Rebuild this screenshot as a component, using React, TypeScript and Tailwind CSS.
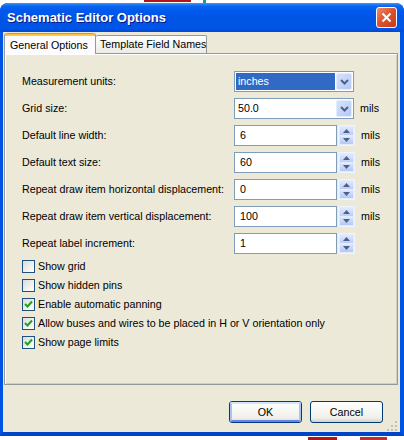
import React from 'react';

const ui = "font-['Liberation_Sans',Arial,sans-serif] text-[10.7px] text-black whitespace-nowrap";

function Chevron() {
  return (
    <svg width="9" height="6" viewBox="0 0 9 6">
      <path d="M1 1 L4.5 4.5 L8 1" stroke="#4D6185" strokeWidth="2" fill="none" />
    </svg>
  );
}

function Combo({ value, selected }: { value: string; selected?: boolean }) {
  return (
    <div className="flex h-[21px] w-[120px] shrink-0 items-stretch border border-[#7F9DB9] bg-white p-[1px]">
      <div className="flex flex-1 items-center pr-[1px]">
        <div
          className={
            selected
              ? 'flex h-full w-full items-center bg-[#316AC5] pl-[2px] text-white'
              : 'flex h-full w-full items-center pl-[2px]'
          }
        >
          {value}
        </div>
      </div>
      <div className="flex w-[16px] items-center justify-center rounded-[2px] border border-[#E3EBFD] bg-[linear-gradient(135deg,#D6E2FE,#B4C8F6)]">
        <Chevron />
      </div>
    </div>
  );
}

function SpinArrow({ up }: { up?: boolean }) {
  return (
    <svg width="7" height="4" viewBox="0 0 7 4">
      <path d={up ? 'M0 4 L3.5 0 L7 4 Z' : 'M0 0 L3.5 4 L7 0 Z'} fill="#4D6185" />
    </svg>
  );
}

function Spin({ value }: { value: string }) {
  return (
    <div className="flex h-[21px] shrink-0 items-stretch">
      <div className="flex w-[103px] items-center border border-[#7F9DB9] bg-white pl-[5px]">{value}</div>
      <div className="ml-[1px] flex w-[17px] flex-col border border-[#F0F4FE]">
        <div className="flex flex-1 items-center justify-center rounded-[1px] border border-[#E3EBFD] bg-[linear-gradient(180deg,#E0E9FE,#BCCDF8)]">
          <SpinArrow up />
        </div>
        <div className="flex flex-1 items-center justify-center rounded-[1px] border border-[#E3EBFD] bg-[linear-gradient(180deg,#D6E2FE,#B4C8F6)]">
          <SpinArrow />
        </div>
      </div>
    </div>
  );
}

function Row({ label, unit, children }: { label: string; unit?: boolean; children: React.ReactNode }) {
  return (
    <div className="flex h-[21px] items-center">
      <div className="w-[212px] shrink-0">{label}</div>
      {children}
      {unit && <span className="ml-[6px]">mils</span>}
    </div>
  );
}

function Check({ label, checked }: { label: string; checked?: boolean }) {
  return (
    <div className="flex h-[19px] items-center">
      <div className="flex h-[13px] w-[13px] items-center justify-center border border-[#1C5180] bg-[linear-gradient(135deg,#DCDCD7,#FFFFFF)]">
        {checked && (
          <svg width="9" height="9" viewBox="0 0 9 9">
            <path d="M1 4 L3.5 6.5 L8 1.5" stroke="#21A121" strokeWidth="2" fill="none" />
          </svg>
        )}
      </div>
      <span className="ml-[3px]">{label}</span>
    </div>
  );
}

function Btn({ label, isDefault }: { label: string; isDefault?: boolean }) {
  return (
    <div className="h-[22px] w-[73px] rounded-[3px] border border-[#003C74] bg-[linear-gradient(180deg,#FFFFFF,#F0F0EA_80%,#D6D0C5)]">
      <div
        className={
          isDefault
            ? 'flex h-full w-full items-center justify-center rounded-[2px] border-2 border-[#A8C4F0] border-t-[#CEE7FF] border-b-[#6982EE]'
            : 'flex h-full w-full items-center justify-center'
        }
      >
        {label}
      </div>
    </div>
  );
}

export default function App() {
  return (
    <div className={`relative h-[440px] w-[404px] overflow-hidden bg-white ${ui}`}>
      <div className="absolute left-[144px] top-0 h-[2px] w-[47px] bg-[#B01818]" />
      <div className="absolute left-[203px] top-0 h-[3px] w-[3px] bg-[#13A090]" />
      <div className="absolute left-[308px] top-[437px] h-[3px] w-[29px] bg-[#B01818]" />
      <div className="absolute left-[360px] top-[437px] h-[3px] w-[27px] bg-[#C03030]" />

      <div className="mt-[3px] flex h-[433px] w-[404px] flex-col overflow-hidden rounded-t-[8px] bg-[#0054E3]">
        {/* title bar */}
        <div className="flex h-[29px] shrink-0 items-center bg-[linear-gradient(180deg,#3D95FF_0px,#0A66F0_3px,#0058EE_8px,#0054E3_18px,#0056EB_25px,#0049D0_29px)] pl-[7px] pr-[7px]">
          <div className="flex-1 pt-[1px] font-['Liberation_Sans',Arial,sans-serif] text-[13px] font-bold text-white [text-shadow:1px_1px_0_#0A1883]">
            Schematic Editor Options
          </div>
          <div className="flex h-[21px] w-[21px] items-center justify-center rounded-[3px] border border-white bg-[linear-gradient(135deg,#F08C6C,#E1532F_45%,#C43A18)]">
            <svg width="11" height="11" viewBox="0 0 11 11">
              <path d="M1.5 1.5 L9.5 9.5 M9.5 1.5 L1.5 9.5" stroke="white" strokeWidth="2" />
            </svg>
          </div>
        </div>

        {/* client */}
        <div className="flex flex-1 flex-col border-b-4 border-l-[3px] border-r-4 border-[#0054E3] border-b-[#0044C8] bg-[#ECE9D8]">
          {/* tabs */}
          <div className="ml-[1px] mt-[1px] flex h-[20px] items-end">
            <div className="relative z-10 -mb-[1px] flex h-[21px] w-[92px] flex-col rounded-t-[3px] border-x border-[#919B9C] bg-[#FCFCFE]">
              <div className="h-[3px] rounded-t-[3px] border-t border-[#E68B2C] bg-[#FFC83C]" />
              <div className="flex flex-1 items-center pl-[5px]">General Options</div>
            </div>
            <div className="flex h-[18px] w-[111px] items-center rounded-t-[2px] border-r border-t border-[#919B9C] bg-[linear-gradient(180deg,#FFFFFF,#ECEBE5)] pl-[4px]">
              Template Field Names
            </div>
          </div>

          {/* panel */}
          <div className="ml-[1px] mr-[2px] h-[332px] border border-[#919B9C] bg-[#ECE9D8] shadow-[inset_1px_1px_0_#FFFFFF,inset_-1px_-1px_0_#D0CEC4]">
            <div className="flex flex-col gap-[6px] pl-[17px] pt-[17px]">
              <Row label="Measurement units:">
                <Combo value="inches" selected />
              </Row>
              <Row label="Grid size:" unit>
                <Combo value="50.0" />
              </Row>
              <Row label="Default line width:" unit>
                <Spin value="6" />
              </Row>
              <Row label="Default text size:" unit>
                <Spin value="60" />
              </Row>
              <Row label="Repeat draw item horizontal displacement:" unit>
                <Spin value="0" />
              </Row>
              <Row label="Repeat draw item vertical displacement:" unit>
                <Spin value="100" />
              </Row>
              <Row label="Repeat label increment:">
                <Spin value="1" />
              </Row>
            </div>
            <div className="mt-[3px] flex flex-col pl-[17px]">
              <Check label="Show grid" />
              <Check label="Show hidden pins" />
              <Check label="Enable automatic panning" checked />
              <Check label="Allow buses and wires to be placed in H or V orientation only" checked />
              <Check label="Show page limits" checked />
            </div>
          </div>

          {/* buttons */}
          <div className="relative flex flex-1 justify-end gap-[8px] pr-[17px] pt-[16px]">
            <Btn label="OK" isDefault />
            <Btn label="Cancel" />
            <svg className="absolute bottom-0 right-[2px]" width="11" height="11" viewBox="0 0 11 11">
              <g fill="#C4C1B0">
                <rect x="8" y="0" width="2" height="2" />
                <rect x="4" y="4" width="2" height="2" />
                <rect x="8" y="4" width="2" height="2" />
                <rect x="0" y="8" width="2" height="2" />
                <rect x="4" y="8" width="2" height="2" />
                <rect x="8" y="8" width="2" height="2" />
              </g>
            </svg>
          </div>
        </div>
      </div>
    </div>
  );
}
